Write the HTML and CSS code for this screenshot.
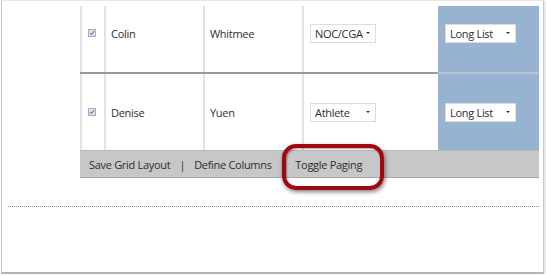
FILE: index.html
```html
<!DOCTYPE html>
<html lang="en">

<head>
    <meta charset="UTF-8">
    <title>grid</title>
    <link rel="stylesheet" href="styles.css">
</head>

<body>
    <div class="frame">
        <div class="panel">
            <div class="clip">
                <table class="grid">
                    <tr>
                        <td class="chk"><svg width="8" height="8" viewBox="0 0 8 8"><rect x="0.5" y="0.5" width="7" height="7" fill="#dfe0ea" stroke="#a9abbf"/><path d="M2 4.2 L3.4 5.6 L6 2.2" fill="none" stroke="#4a5078" stroke-width="1"/></svg></td>
                        <td class="name">Colin</td>
                        <td class="name">Whitmee</td>
                        <td class="role"><div class="select">NOC/CGA</div></td>
                        <td class="list"><div class="select wide">Long List</div></td>
                    </tr>
                    <tr>
                        <td class="chk"><svg width="8" height="8" viewBox="0 0 8 8"><rect x="0.5" y="0.5" width="7" height="7" fill="#dfe0ea" stroke="#a9abbf"/><path d="M2 4.2 L3.4 5.6 L6 2.2" fill="none" stroke="#4a5078" stroke-width="1"/></svg></td>
                        <td class="name">Denise</td>
                        <td class="name">Yuen</td>
                        <td class="role"><div class="select">Athlete</div></td>
                        <td class="list"><div class="select wide">Long List</div></td>
                    </tr>
                </table>
            </div>
            <div class="toolbar">
                <span class="link">Save Grid Layout</span>
                <span class="sep">|</span>
                <span class="link">Define Columns</span>
                <span class="sep">|</span>
                <span class="link marked">Toggle Paging</span>
            </div>
        </div>
        <div class="divider"></div>
    </div>
</body>

</html>
```

FILE: styles.css
```css
* {
    margin: 0;
    padding: 0;
    box-sizing: border-box;
}

body {
    font-family: "Open Sans", "Noto Sans", sans-serif;
    font-size: 11px;
    letter-spacing: -0.3px;
    color: #2e2e2e;
    background: #fff;
}

.frame {
    width: 543px;
    height: 274px;
    margin-left: 1px;
    border: 1px solid #c9c9c9;
    border-top-color: #e6e6e6;
    border-bottom: 2px solid #b5b5b5;
    padding-top: 5px;
    box-shadow: 1px 1px 2px rgba(0, 0, 0, 0.15);
}

.panel {
    width: 459px;
    margin-left: 78px;
}

.clip {
    overflow: hidden;
}

.grid {
    border-collapse: collapse;
    table-layout: fixed;
    width: 459px;
    margin-top: -12px;
}

.grid td {
    height: 79px;
    vertical-align: middle;
    border-bottom: 2px solid #9a9a9a;
}

.grid tr:last-child td {
    border-bottom: 0;
    height: 77px;
}

.chk {
    width: 24px;
    text-align: center;
    border-left: 2px solid #e3e3e3;
    border-right: 2px solid #e3e3e3;
}

.chk svg {
    display: block;
    margin: 0 auto;
    position: relative;
    left: -1px;
}

.name {
    width: 99px;
    padding-left: 5px;
    border-right: 2px solid #e3e3e3;
}

.role {
    width: 135px;
    padding-left: 6px;
    border-left: 1px solid #b0b0b0;
}

.grid td.list {
    width: 102px;
    padding-left: 7px;
    background: #98b3d1;
    border-bottom-color: #b8c4d2;
}

.select {
    display: flex;
    align-items: center;
    width: 66px;
    height: 19px;
    padding-left: 4px;
    background: #fff;
    border: 1px solid #dcdcdc;
}

.select::after {
    content: "";
    margin-left: auto;
    margin-right: 5px;
    border-left: 2px solid transparent;
    border-right: 2px solid transparent;
    border-top: 2px solid #333;
}

.select.wide {
    width: 71px;
}

.toolbar {
    display: flex;
    align-items: center;
    height: 28px;
    padding-left: 9px;
    background: #c7c7c7;
    border-top: 1px solid #b9b9b9;
    border-bottom: 1px solid #a9a9a9;
}

.sep {
    margin: 0 9px;
}

.marked {
    position: relative;
}

.marked::after {
    content: "";
    position: absolute;
    left: -13px;
    right: -22px;
    top: -13px;
    bottom: -18px;
    border: 4px solid #a1070f;
    border-radius: 14px;
    box-shadow: 1px 2px 4px rgba(0, 0, 0, 0.5), inset 1px 1px 2px rgba(0, 0, 0, 0.35);
}

.divider {
    margin: 28px 0 0 6px;
    width: 531px;
    border-top: 1px dotted #8a8a8a;
}
```
